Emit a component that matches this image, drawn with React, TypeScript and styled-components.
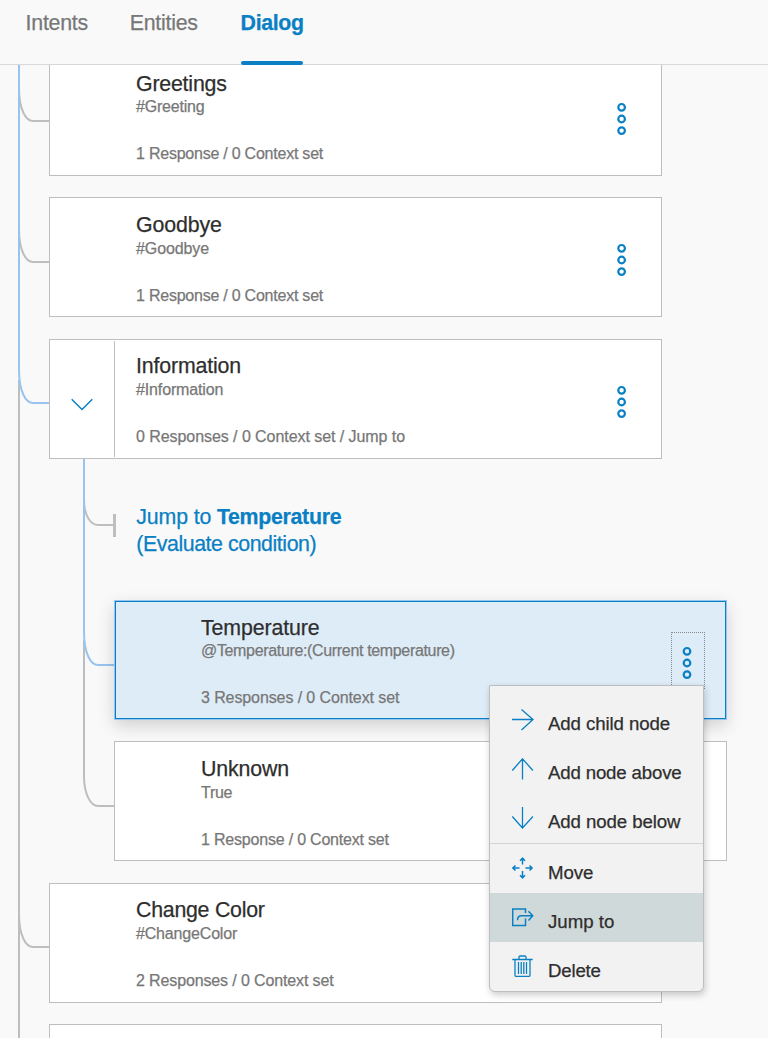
import React from "react";
import styled, { createGlobalStyle, css } from "styled-components";

const blue = "#0a80c4";
const lightBlue = "#98c5f0";
const line = "#bebebe";

const GlobalStyle = createGlobalStyle`
  * { box-sizing: border-box; }
  body {
    margin: 0;
    background: #f9f9f9;
    font-family: "Liberation Sans", Arial, sans-serif;
    color: #2e2e2e;
    -webkit-text-stroke: 0.25px currentColor;
  }
`;

const Page = styled.div`
  display: flex;
  flex-direction: column;
  width: 768px;
  height: 1038px;
  overflow: hidden;
`;

const Tabs = styled.nav`
  display: flex;
  flex: none;
  height: 65px;
  padding-left: 25.6px;
  border-bottom: 1px solid #d8d8d8;
`;

const Tab = styled.a<{ $active?: boolean; $width: number }>`
  position: relative;
  width: ${(p) => p.$width}px;
  padding-top: 11px;
  font-size: 21.33px;
  line-height: 25px;
  letter-spacing: -0.25px;
  white-space: nowrap;
  color: #777;
  ${(p) =>
    p.$active &&
    css`
      color: ${blue};
      font-weight: 700;
      letter-spacing: -0.35px;
      &::after {
        content: "";
        position: absolute;
        left: 0.4px;
        top: 61px;
        width: 62px;
        height: 4px;
        border-radius: 2px;
        background: ${blue};
      }
    `}
`;

const Canvas = styled.main`
  position: relative;
  flex: 1;
  overflow: hidden;
`;

const Connectors = styled.svg`
  position: absolute;
  left: 0;
  top: 0;
  fill: none;
  stroke-width: 2;
`;

const NodeList = styled.div`
  position: relative;
  display: flex;
  flex-direction: column;
  width: 662px;
  margin-top: -9px;
  padding-left: 49px;
`;

const Children = styled.div`
  display: flex;
  flex-direction: column;
  padding-left: 65px;
  width: 678px;
`;

const Card = styled.section<{ $selected?: boolean; $gap?: number }>`
  display: flex;
  flex: none;
  width: 613px;
  height: 120px;
  margin-bottom: ${(p) => p.$gap ?? 21}px;
  background: #fff;
  border: 1px solid ${line};
  ${(p) =>
    p.$selected &&
    css`
      position: relative;
      background: #deecf8;
      border-color: ${lightBlue};
      box-shadow: inset 0 0 0 1px ${blue}, 0 6px 16px rgba(0, 0, 0, 0.16);
    `}
`;

const Gutter = styled.div<{ $divided?: boolean }>`
  display: flex;
  align-items: center;
  justify-content: center;
  width: 65px;
  margin: 1px 0;
  padding-top: 11px;
  border-right: 1px solid ${(p) => (p.$divided ? line : "transparent")};
`;

const Body = styled.div<{ $top: number }>`
  flex: 1;
  padding: ${(p) => p.$top}px 0 0 21px;
  white-space: nowrap;
`;

const Title = styled.h2<{ $track?: number; $below: number }>`
  margin: 0 0 ${(p) => p.$below}px;
  font-size: 21.33px;
  font-weight: 400;
  line-height: 25px;
  letter-spacing: ${(p) => p.$track ?? 0}px;
`;

const Detail = styled.div<{ $track?: number }>`
  color: #777;
  font-size: 16px;
  line-height: 20px;
  letter-spacing: ${(p) => p.$track ?? 0}px;
`;

const Summary = styled(Detail)`
  margin-top: 27px;
`;

const Kebab = styled.button<{ $focused?: boolean }>`
  align-self: flex-start;
  width: 34px;
  height: 57px;
  margin: 31px 21px 0 0;
  padding: 0;
  background: none;
  border: 1px ${(p) => (p.$focused ? "dotted #888" : "solid transparent")};
  svg {
    display: block;
  }
`;

const JumpNote = styled.p`
  margin: 24px 0 42px 22.3px;
  height: 54px;
  color: ${blue};
  font-size: 21.33px;
  line-height: 27px;
  letter-spacing: -0.43px;
  span {
    letter-spacing: -0.15px;
  }
  b {
    letter-spacing: -0.3px;
  }
`;

const Menu = styled.div`
  position: absolute;
  left: 489px;
  top: 620px;
  width: 215px;
  padding-top: 10px;
  background: #f2f2f2;
  border: 1px solid ${line};
  border-radius: 0 0 6px 6px;
  box-shadow: 1px 3px 7px rgba(0, 0, 0, 0.2);
  overflow: hidden;
`;

const MenuItem = styled.div<{ $hover?: boolean; $track?: number; $line?: number }>`
  display: flex;
  height: 49px;
  padding: 13px 0 0 22px;
  gap: 14px;
  font-size: 18.67px;
  line-height: ${(p) => p.$line ?? 30}px;
  letter-spacing: ${(p) => p.$track ?? 0}px;
  white-space: nowrap;
  background: ${(p) => (p.$hover ? "#d0d9d9" : "transparent")};
`;

const MenuIcon = styled.svg<{ $weight?: number }>`
  flex: none;
  width: 22px;
  height: 22px;
  fill: none;
  stroke: ${blue};
  stroke-width: ${(p) => p.$weight ?? 1.3};
`;

const Divider = styled.div`
  height: 1px;
  background: #d4d4d4;
`;

interface NodeProps {
  title: string;
  condition: string;
  summary: string;
  tracks?: [number, number, number];
  /* space above the title, and between the title and the condition */
  lead?: [number, number];
  gap?: number;
  expanded?: boolean;
  selected?: boolean;
}

function DialogNode({
  title,
  condition,
  summary,
  tracks = [0, 0, 0],
  lead = [15, 0],
  gap,
  expanded,
  selected,
}: NodeProps) {
  const cx = selected ? 15 : 14.6;
  return (
    <Card $selected={selected} $gap={gap}>
      <Gutter $divided={expanded}>
        {expanded && (
          <svg width="22" height="13" viewBox="0 0 22 13" fill="none" stroke={blue} strokeWidth="1.5">
            <path d="M0.7 1.2 11 11.5 21.3 1.2" />
          </svg>
        )}
      </Gutter>
      <Body $top={lead[0]}>
        <Title $track={tracks[0]} $below={lead[1]}>
          {title}
        </Title>
        <Detail $track={tracks[1]}>{condition}</Detail>
        <Summary $track={tracks[2]}>{summary}</Summary>
      </Body>
      <Kebab $focused={selected} aria-label="Node options">
        <svg width="32" height="54" fill="none" stroke={blue} strokeWidth="2.2">
          <circle cx={cx} cy="17.3" r="3.3" />
          <circle cx={cx} cy="29" r="3.3" />
          <circle cx={cx} cy="40.6" r="3.3" />
        </svg>
      </Kebab>
    </Card>
  );
}

export default function App() {
  return (
    <Page>
      <GlobalStyle />
      <Tabs>
        <Tab $width={104.2}>Intents</Tab>
        <Tab $width={110.8}>Entities</Tab>
        <Tab $width={64} $active>
          Dialog
        </Tab>
      </Tabs>
      <Canvas>
        <Connectors width="768" height="973" viewBox="0 65 768 973">
          <g stroke={line}>
            <path d="M19 380V1038M84 640V776C84 795 91 806 98 806H115" />
            <path d="M19 88C19 110 26 121 33 121H50M19 229C19 251 26 262 33 262H50M19 914C19 936 26 947 33 947H50" />
            <path d="M84 500C84 516 91 525 98 525H114" />
            <path d="M114.5 514V537" strokeWidth="3" />
          </g>
          <g stroke={lightBlue}>
            <path d="M19 65V370C19 392 26 403 33 403H50M84 459V632C84 654 91 665 98 665H115" />
          </g>
        </Connectors>
        <NodeList>
          <DialogNode title="Greetings" condition="#Greeting" summary="1 Response / 0 Context set" tracks={[-0.2, -0.2, -0.23]} />
          <DialogNode
            title="Goodbye"
            condition="#Goodbye"
            summary="1 Response / 0 Context set"
            tracks={[-0.12, -0.1, -0.23]}
            lead={[15, 1]}
            gap={22}
          />
          <DialogNode
            title="Information"
            condition="#Information"
            summary="0 Responses / 0 Context set / Jump to"
            tracks={[-0.16, -0.14, -0.06]}
            lead={[14, 1]}
            gap={21}
            expanded
          />
          <Children>
            <JumpNote>
              <span>Jump to </span>
              <b>Temperature</b>
              <br />
              (Evaluate condition)
            </JumpNote>
            <DialogNode
              title="Temperature"
              condition="@Temperature:(Current temperature)"
              summary="3 Responses / 0 Context set"
              tracks={[-0.12, -0.34, -0.1]}
              selected
            />
            <DialogNode
              title="Unknown"
              condition="True"
              summary="1 Response / 0 Context set"
              tracks={[-0.15, -0.3, -0.2]}
              lead={[15, 1]}
              gap={22}
            />
          </Children>
          <DialogNode
            title="Change Color"
            condition="#ChangeColor"
            summary="2 Responses / 0 Context set"
            tracks={[-0.25, -0.17, -0.13]}
            lead={[14, 1]}
          />
          <DialogNode title="" condition="" summary="" />
        </NodeList>
        <Menu>
          <MenuItem $track={-0.1}>
            <MenuIcon viewBox="0 0 22 22">
              <path d="M0 10.5H21M9.5 0.5 21 10.5 9.5 21" />
            </MenuIcon>
            Add child node
          </MenuItem>
          <MenuItem $track={-0.17}>
            <MenuIcon viewBox="0 0 22 22">
              <path d="M10.5 21.5V0.5M0.3 12.5 10.5 0.8 20.9 12.5" />
            </MenuIcon>
            Add node above
          </MenuItem>
          <MenuItem $track={-0.1}>
            <MenuIcon viewBox="0 0 22 22">
              <path d="M10.5 0V21M0.3 9.5 10.5 21 20.9 9.5" />
            </MenuIcon>
            Add node below
          </MenuItem>
          <Divider />
          <MenuItem $track={-0.1} $line={32}>
            <MenuIcon viewBox="0 0 22 22" $weight={1.5}>
              <path d="M10.5 7.5V1M8 3.8 10.5 1.2 13 3.8M10.5 14V21M8 18.2 10.5 20.8 13 18.2M7.5 11H1M3.5 8.5 0.9 11 3.5 13.5M13.5 11H20.5M17.5 8.5 20.1 11 17.5 13.5" />
            </MenuIcon>
            Move
          </MenuItem>
          <MenuItem $hover $line={32}>
            <MenuIcon viewBox="0 0 22 22" $weight={1.5}>
              <path d="M13.5 7V3H0.7V19.5H13.5V12.5M5.5 14.3C5.5 11 7 9.8 9.5 9.8H20.5M16.5 5.2 20.7 9.8 16.5 14.4" />
            </MenuIcon>
            Jump to
          </MenuItem>
          <MenuItem $track={-0.2} $line={32}>
            <MenuIcon viewBox="0 0 22 22" $weight={1.3}>
              <path d="M0.3 4.5H20.7M7 4V2.2Q7 1 8.2 1H12.8Q14 1 14 2.2V4M3 4.5V20.2Q3 21.4 4.2 21.4H16.8Q18 21.4 18 20.2V4.5M6.5 7V19M9.2 7V19M11.8 7V19M14.5 7V19" />
            </MenuIcon>
            Delete
          </MenuItem>
        </Menu>
      </Canvas>
    </Page>
  );
}
